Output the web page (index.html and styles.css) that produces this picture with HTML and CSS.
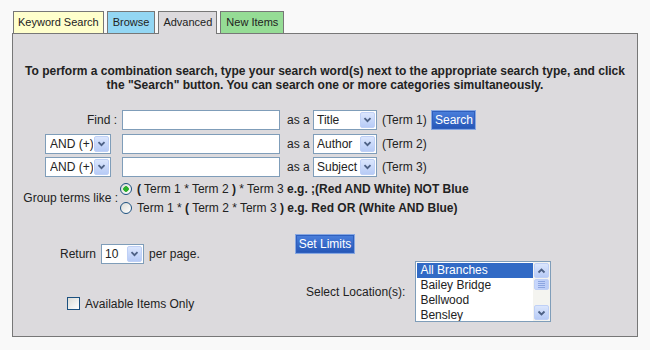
FILE: index.html
```html
<!DOCTYPE html>
<html lang="en">
<head>
  <meta charset="UTF-8">
  <meta name="viewport" content="width=device-width, initial-scale=1.0">
  <title>Advanced Search</title>
  <link rel="stylesheet" href="styles.css">
</head>
<body>
  <ul class="tabs">
    <li class="tab tab-keyword">Keyword Search</li>
    <li class="tab tab-browse">Browse</li>
    <li class="tab tab-advanced">Advanced</li>
    <li class="tab tab-new">New Items</li>
  </ul>

  <div class="panel">
    <p class="intro">To perform a combination search, type your search word(s) next to the appropriate search type, and click the "Search" button. You can search one or more categories simultaneously.</p>

    <form class="search-grid">
      <label class="find-label" for="term1">Find :</label>
      <input class="term-input" type="text" id="term1">
      <span class="as-a">as a</span>
      <div class="dropdown type-drop">
        <select><option>Title</option></select>
        <span class="arrow"><svg width="9" height="6" viewBox="0 0 9 6"><path d="M1.5 1.2 L4.5 4.2 L7.5 1.2" fill="none" stroke="#4d6185" stroke-width="1.8"/></svg></span>
      </div>
      <span class="term">(Term 1)</span>
      <button type="button" class="blue-btn">Search</button>

      <div class="dropdown op-drop">
        <select><option>AND (+)</option></select>
        <span class="arrow"><svg width="9" height="6" viewBox="0 0 9 6"><path d="M1.5 1.2 L4.5 4.2 L7.5 1.2" fill="none" stroke="#4d6185" stroke-width="1.8"/></svg></span>
      </div>
      <input class="term-input" type="text">
      <span class="as-a">as a</span>
      <div class="dropdown type-drop">
        <select><option>Author</option></select>
        <span class="arrow"><svg width="9" height="6" viewBox="0 0 9 6"><path d="M1.5 1.2 L4.5 4.2 L7.5 1.2" fill="none" stroke="#4d6185" stroke-width="1.8"/></svg></span>
      </div>
      <span class="term">(Term 2)</span>
      <span></span>

      <div class="dropdown op-drop">
        <select><option>AND (+)</option></select>
        <span class="arrow"><svg width="9" height="6" viewBox="0 0 9 6"><path d="M1.5 1.2 L4.5 4.2 L7.5 1.2" fill="none" stroke="#4d6185" stroke-width="1.8"/></svg></span>
      </div>
      <input class="term-input" type="text">
      <span class="as-a">as a</span>
      <div class="dropdown type-drop">
        <select><option>Subject</option></select>
        <span class="arrow"><svg width="9" height="6" viewBox="0 0 9 6"><path d="M1.5 1.2 L4.5 4.2 L7.5 1.2" fill="none" stroke="#4d6185" stroke-width="1.8"/></svg></span>
      </div>
      <span class="term">(Term 3)</span>
      <span></span>
    </form>

    <div class="group">
      <span class="group-label">Group terms like :</span>
      <div class="group-options">
        <label class="radio-line">
          <input type="radio" name="group" checked>
          <span><b>(</b> Term 1 * Term 2 <b>)</b> * Term 3 <b>e.g. ;(Red AND White) NOT Blue</b></span>
        </label>
        <label class="radio-line">
          <input type="radio" name="group">
          <span>Term 1 * <b>(</b> Term 2 * Term 3 <b>)</b> <b>e.g. Red OR (White AND Blue)</b></span>
        </label>
      </div>
    </div>

    <div class="limits">
      <button type="button" class="blue-btn set-limits">Set Limits</button>

      <div class="return-block">
        <div class="return-row">
          <span>Return</span>
          <div class="dropdown count-drop">
            <select><option>10</option></select>
            <span class="arrow"><svg width="9" height="6" viewBox="0 0 9 6"><path d="M1.5 1.2 L4.5 4.2 L7.5 1.2" fill="none" stroke="#4d6185" stroke-width="1.8"/></svg></span>
          </div>
          <span>per page.</span>
        </div>
        <label class="avail">
          <input type="checkbox">
          <span>Available Items Only</span>
        </label>
      </div>

      <div class="location">
        <span>Select Location(s):</span>
        <div class="listbox">
          <ul class="options">
            <li class="selected">All Branches</li>
            <li>Bailey Bridge</li>
            <li>Bellwood</li>
            <li>Bensley</li>
          </ul>
          <div class="scrollbar">
            <span class="sb-btn"><svg width="9" height="6" viewBox="0 0 9 6"><path d="M1.5 4.5 L4.5 1.5 L7.5 4.5" fill="none" stroke="#4d6185" stroke-width="1.8"/></svg></span>
            <span class="sb-thumb"><i></i><i></i><i></i><i></i></span>
            <span class="sb-track"></span>
            <span class="sb-btn"><svg width="9" height="6" viewBox="0 0 9 6"><path d="M1.5 1.5 L4.5 4.5 L7.5 1.5" fill="none" stroke="#4d6185" stroke-width="1.8"/></svg></span>
          </div>
        </div>
      </div>
    </div>
  </div>
</body>
</html>
```

FILE: styles.css
```css
/* General Styles */
* {
  margin: 0;
  padding: 0;
  box-sizing: border-box;
}

body {
  font-family: "Liberation Sans", Arial, sans-serif;
  font-size: 12px;
  color: #222;
  background-color: #f9f9f9;
}

/* Tabs */
.tabs {
  display: flex;
  align-items: flex-start;
  gap: 3px;
  list-style: none;
  height: 22px;
  margin: 11px 0 0 13px;
}

.tab {
  font-size: 11px;
  line-height: 21px;
  height: 22px;
  padding: 0 4px;
  border: 1px solid #777;
  border-bottom: none;
}

.tab-keyword {
  background: #ffffcc;
}

.tab-browse {
  background: #93d6f3;
  padding: 0 5px;
}

.tab-advanced {
  background: #dcdadd;
  height: 23px;
  position: relative;
  z-index: 1;
}

.tab-new {
  background: #95dc95;
  padding: 0 5px;
}

/* Panel */
.panel {
  margin: 0 12px;
  border: 1px solid #777;
  background: #dcdadd;
  padding: 30px 0 14px;
}

.intro {
  font-weight: bold;
  text-align: center;
  line-height: 14px;
  padding: 0 8px;
}

/* Search terms */
.search-grid {
  display: grid;
  grid-template-columns: 99px 158px 33px 64px 54px 45px;
  grid-auto-rows: 20px;
  row-gap: 3.5px;
  align-items: center;
  margin: 18px 0 0 10px;
}

.find-label {
  text-align: right;
  padding-right: 5px;
}

.term-input {
  height: 20px;
  width: 158px;
  border: 1px solid #7f9db9;
  background: #fff;
  font: inherit;
  padding: 0 3px;
}

.as-a {
  padding-left: 7px;
}

.term {
  padding-left: 5px;
}

.dropdown {
  display: flex;
  align-items: center;
  height: 20px;
  border: 1px solid #7f9db9;
  background: #fff;
}

.dropdown select {
  flex: 1;
  min-width: 0;
  appearance: none;
  border: none;
  outline: none;
  background: transparent;
  font: inherit;
  color: #222;
  padding-left: 3px;
}

.arrow, .sb-btn {
  display: flex;
  align-items: center;
  justify-content: center;
  width: 15px;
  height: 16px;
  margin: 1px;
  background: linear-gradient(#dbe6fd, #b7cbf6);
  border: 1px solid #bfd0f6;
  border-radius: 2px;
}

.type-drop {
  width: 64px;
}

.op-drop {
  width: 66px;
  justify-self: end;
  margin-right: 11px;
}

.op-drop select {
  padding-left: 4px;
}

.count-drop {
  width: 43px;
}

.blue-btn {
  height: 20px;
  padding: 0 3px;
  font: inherit;
  color: #fff;
  background: linear-gradient(#4b80dd, #2455b6);
  border: 1px solid #86a7e2;
  box-shadow: inset 0 0 0 1px #2f5fbd;
}

/* Grouping */
.group {
  display: flex;
  align-items: center;
  margin: 2px 0 0 10px;
}

.group-label {
  flex: 0 0 99px;
  white-space: nowrap;
  text-align: right;
  padding-right: 4px;
}

.radio-line {
  display: flex;
  align-items: center;
  gap: 5px;
  height: 19px;
  margin-left: -2px;
}

.radio-line input {
  appearance: none;
  width: 12px;
  height: 12px;
  border: 1px solid #1c5180;
  border-radius: 50%;
  background: linear-gradient(135deg, #dcdcd7, #fff);
}

.radio-line input:checked {
  background: radial-gradient(circle, #2bb02b 0 2.5px, transparent 3px), linear-gradient(135deg, #dcdcd7, #fff);
}

/* Limits */
.limits {
  display: grid;
  grid-template-columns: 293px 1fr;
  margin-top: 17px;
}

.set-limits {
  grid-column: 1 / 3;
  grid-row: 1;
  justify-self: center;
}

.return-block {
  grid-column: 1;
  grid-row: 1 / 3;
  padding: 10px 0 0 47px;
}

.return-row {
  display: flex;
  align-items: center;
  gap: 5px;
}

.avail {
  display: flex;
  align-items: center;
  gap: 5px;
  height: 15px;
  margin: 32px 0 0 7px;
}

.avail input {
  appearance: none;
  width: 13px;
  height: 13px;
  border: 1px solid #1c5180;
  background: linear-gradient(135deg, #dcdcd7, #fff);
}

.location {
  grid-column: 2;
  grid-row: 2;
  display: flex;
  align-items: center;
  gap: 10px;
  margin-top: 7px;
}

.listbox {
  display: flex;
  width: 136px;
  height: 61px;
  border: 1px solid #7f9db9;
  background: #fff;
  overflow: hidden;
}

.options {
  flex: 1;
  list-style: none;
  padding: 1px 0 0 1px;
}

.options li {
  line-height: 15px;
  padding-left: 3px;
}

.options .selected {
  background: #316ac5;
  color: #fff;
}

.scrollbar {
  display: flex;
  flex-direction: column;
  width: 17px;
  background: #f4f4f0;
}

.sb-btn {
  height: 15px;
}

.sb-thumb {
  display: flex;
  flex-direction: column;
  align-items: center;
  justify-content: center;
  gap: 1px;
  height: 11px;
  margin: 0 1px;
  background: linear-gradient(90deg, #c8d7fc, #b9cbf6);
  border: 1px solid #bfd0f6;
  border-radius: 2px;
}

.sb-thumb i {
  width: 7px;
  height: 1px;
  background: #8ca6e0;
}

.sb-track {
  flex: 1;
}
```
